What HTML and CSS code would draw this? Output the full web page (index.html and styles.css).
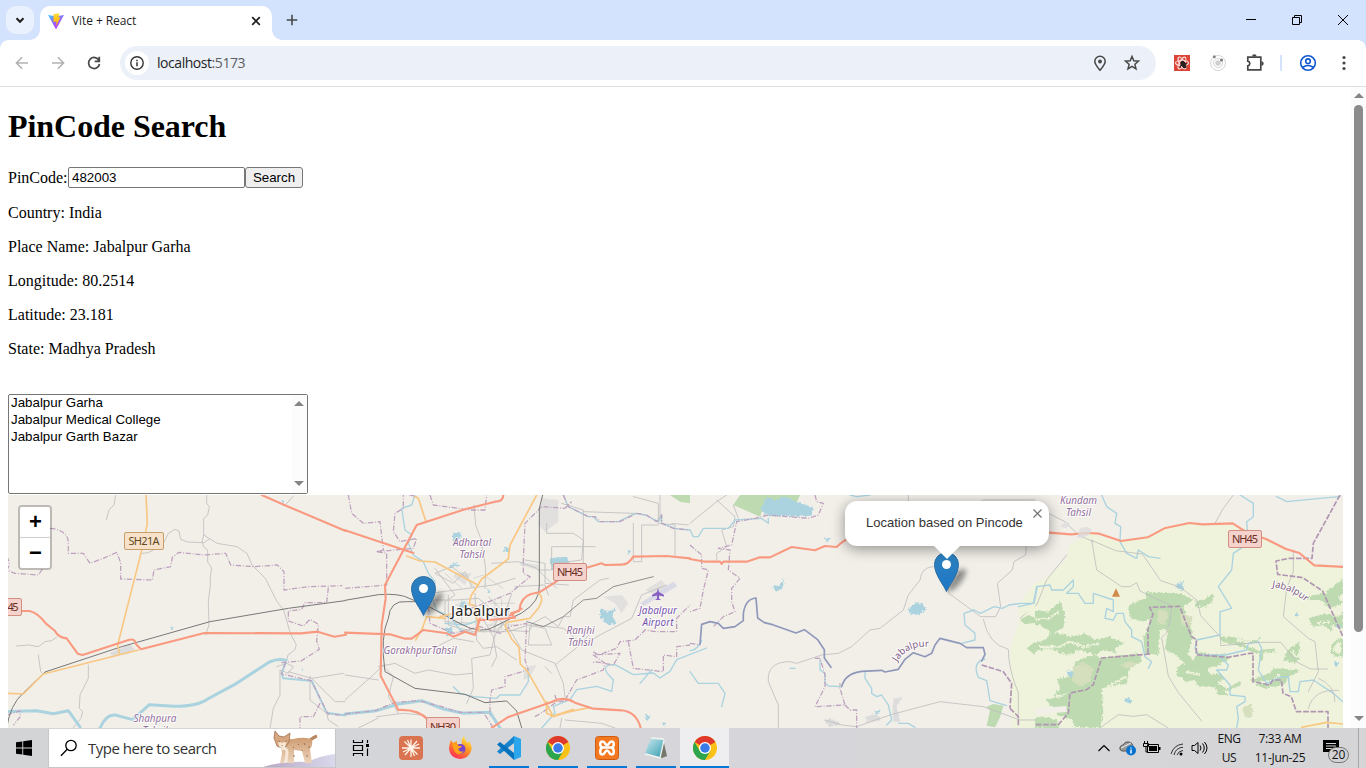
FILE: index.html
```html
<!DOCTYPE html>
<html lang="en">
<head>
<meta charset="utf-8">
<title>Vite + React</title>
<link rel="stylesheet" href="styles.css">
</head>
<body>
<div class="window">
  <header class="tabstrip">
    <button class="tab-search" aria-label="Search tabs"><svg width="28" height="28" viewBox="0 0 28 28"><path d="M10.5 12.3l3.5 3.5 3.5-3.5" fill="none" stroke="#1f1f1f" stroke-width="2"/></svg></button>
    <div class="tab">
      <svg class="favicon" width="16" height="16" viewBox="0 0 32 32"><defs><linearGradient id="va" x1="0" y1="0" x2=".6" y2="1"><stop stop-color="#41d1ff"/><stop offset=".5" stop-color="#8c6cff"/><stop offset="1" stop-color="#bd34fe"/></linearGradient><linearGradient id="vb" x1="0" y1="0" x2="0" y2="1"><stop stop-color="#ffea83"/><stop offset=".2" stop-color="#ffd020"/><stop offset="1" stop-color="#ffa800"/></linearGradient></defs><path d="M0 4l12 2h8l12-2L17 31q-1 2-2 0z" fill="url(#va)"/><path d="M11 2l12-2-2 9 4-1-9 19 1-10-6 1z" fill="url(#vb)"/></svg>
      <span class="tab-title">Vite + React</span>
      <svg class="tab-close" width="16" height="16" viewBox="0 0 16 16"><path d="M4.200 4.200l7.600 7.600M11.800 4.200l-7.600 7.600" stroke="#1f1f1f" stroke-width="1.700"/></svg>
    </div>
    <svg class="new-tab" width="20" height="20" viewBox="0 0 20 20"><path d="M10 4.700v10.600M4.700 10h10.600" stroke="#474747" stroke-width="1.600"/></svg>
    <div class="window-controls">
      <svg width="46" height="40"><path d="M18 19.500h10" stroke="#000"/></svg>
      <svg width="46" height="40"><path d="M18.500 17.500h7v7h-7zM20.500 17v-1.500h7v7h-2" fill="none" stroke="#000"/></svg>
      <svg width="46" height="40"><path d="M18 15l10 10M28 15L18 25" stroke="#000"/></svg>
    </div>
  </header>
  <nav class="toolbar">
    <svg class="nav-icon" viewBox="0 0 24 24"><path d="M18 12H7M12.200 6.200L6.400 12l5.800 5.800" fill="none" stroke="#b2b2b2" stroke-width="1.600"/></svg>
    <svg class="nav-icon" viewBox="0 0 24 24"><path d="M6 12H17M11.800 6.200l5.800 5.800-5.800 5.800" fill="none" stroke="#b2b2b2" stroke-width="1.600"/></svg>
    <svg class="nav-icon" viewBox="0 0 24 24"><path d="M17 9.500a5.500 5.500 0 1 0 .5 3.500M17.300 5.800v4.600h-4.600" fill="none" stroke="#474747" stroke-width="1.700"/></svg>
    <div class="omnibox">
      <span class="site-info"><svg width="16" height="16" viewBox="0 0 16 16"><circle cx="8" cy="8" r="6.200" fill="none" stroke="#333" stroke-width="1.400"/><path d="M8 7.200v4M8 4.700v1.500" stroke="#333" stroke-width="1.500"/></svg></span>
      <span class="url">localhost<i>:5173</i></span>
      <svg class="pin-icon" width="20" height="20" viewBox="0 0 20 20"><path d="M10 17.200C7 13.700 4.800 11.300 4.800 8.500a5.200 5.200 0 0 1 10.400 0c0 2.800-2.200 5.200-5.200 8.700z" fill="none" stroke="#474747" stroke-width="1.500"/><circle cx="10" cy="8.500" r="1.900" fill="#474747"/></svg>
      <svg class="star-icon" width="20" height="20" viewBox="0 0 20 20"><path d="M10 3.500l1.800 4.300 4.700.4-3.600 3.100 1.100 4.600-4-2.500-4 2.500 1.100-4.600-3.600-3.100 4.700-.4z" fill="none" stroke="#474747" stroke-width="1.500"/></svg>
    </div>
    <div class="extensions">
      <svg width="16" height="16" viewBox="0 0 16 16"><path fill="#db4436" d="M0 0h16v16H0z"/><g fill="none" stroke="#f8d8d4" stroke-width="1.200"><ellipse cx="8" cy="8" rx="6.500" ry="2.500"/><ellipse cx="8" cy="8" rx="6.500" ry="2.500" transform="rotate(60 8 8)"/><ellipse cx="8" cy="8" rx="6.500" ry="2.500" transform="rotate(120 8 8)"/></g><path d="M7 7l2-1 2 2 1 4-2 1-3-3zM7 10l-1 3M11 8l2 1M11 10l1 3" stroke="#292020" fill="#292020"/></svg>
      <svg width="16" height="16" viewBox="0 0 16 16"><g fill="none" stroke="#d4d4d4"><circle cx="8" cy="8" r="7.500"/><circle cx="8" cy="8" r="4.500"/></g><circle cx="8" cy="8" r="2.700" fill="#d0d0d0"/><circle cx="4.300" cy="1.800" r="1.500" fill="#858585"/><circle cx="11.500" cy="5" r="1.500" fill="#777"/></svg>
      <svg width="20" height="20" viewBox="0 0 20 20"><path d="M3.800 4.200h13v12.600h-13v-4q2-.4 2-2.300t-2-2.300z" fill="none" stroke="#474747" stroke-width="1.700"/><path d="M8 3.600a2.300 2.300 0 0 1 4.600 0zM17.400 8.200a2.300 2.300 0 0 1 0 4.600z" fill="#474747"/></svg>
      <b class="divider"></b>
      <svg width="18" height="18" viewBox="0 0 18 18"><g fill="none" stroke="#1258d0" stroke-width="1.600"><circle cx="9" cy="9" r="7.300"/><circle cx="9" cy="7.200" r="2.300"/><path d="M3.500 13.500q5.500-4 11 0"/></g></svg>
      <svg width="16" height="16" viewBox="0 0 16 16" fill="#474747"><circle cx="8" cy="2.500" r="1.600"/><circle cx="8" cy="8" r="1.600"/><circle cx="8" cy="13.500" r="1.600"/></svg>
    </div>
  </nav>
  <main class="viewport">
    <div class="page">
      <h1>PinCode Search</h1>
      <div class="search-row"><label for="pin">PinCode:</label><input id="pin" class="pin-input" value="482003"><button class="search-button">Search</button></div>
      <p>Country: India</p>
      <p>Place Name: Jabalpur Garha</p>
      <p>Longitude: 80.2514</p>
      <p>Latitude: 23.181</p>
      <p>State: Madhya Pradesh</p>
      <div class="listbox">
        <ul><li>Jabalpur Garha</li><li>Jabalpur Medical College</li><li>Jabalpur Garth Bazar</li></ul>
        <div class="list-scroll"><span class="arrow-up"></span><span class="arrow-down"></span></div>
      </div>
      <div class="map">
<svg class="map-art" viewBox="8 495 1335 233" width="1335" height="233">
<defs>
<linearGradient id="mk" x1="0" y1="0" x2="0" y2="1"><stop stop-color="#2e80bd"/><stop offset="1" stop-color="#1d78c7"/></linearGradient>
<filter id="soft" x="-50%" y="-50%" width="200%" height="200%"><feGaussianBlur stdDeviation="2.500"/></filter>
<filter id="organic" x="-5%" y="-5%" width="110%" height="110%"><feTurbulence type="fractalNoise" baseFrequency=".14" numOctaves="3" seed="4"/><feDisplacementMap in="SourceGraphic" scale="14" xChannelSelector="R" yChannelSelector="G"/></filter>
<g id="marker"><ellipse cx="10" cy="-12" rx="5" ry="14" transform="rotate(38 10 -12)" fill="#333" opacity=".5" filter="url(#soft)"/><path d="M0-.5C-2-6-12-17-12-27.500a12 12 0 0 1 24 0C12-17 2-6 0-.5z" fill="url(#mk)" stroke="#2a6ea4" stroke-width="1"/><circle cy="-27.500" r="4.500" fill="#fff"/></g>
</defs>
<rect x="8" y="495" width="1335" height="233" fill="#f2efe9"/>

<!-- forest reserve -->
<g transform="translate(1020 490) scale(.33333)">
<path d="M215 130L290 155 385 142 435 115 510 100 640 106 700 147 740 150 880 225 970 231V714H0l-5-370 45-60 50-30 45-40 15-50z" fill="#f0f3dc"/>
<g filter="url(#organic)">
<g fill="#bddab1">
<path d="M5 385l45-25 35 5 35-30 15 35-5 45-35 15-35-25-35 0zM25 465l50-15 20-25 60 15 40-10 30 20 45-10 45 20-30 15 5 15-40-10-25 15-45-15-35 15-65-20-45 15z"/>
<path d="M325 345l55-20-5-20 55 5 50 0 40 20-30 20 15 45 15 40-15 60 45 45-10 25-70-5 0-25 25-15-35-30-25-10 10-65-25 5-5 75-40-5-5-45 25-60-20 10-45-10z"/>
<path d="M240 505l115-15 10 25-35 20-10 45-75 15 5 75-10 45-80-5 0-20-50-15 0-20-20-8-10-20 40-5 20-10-40 5 20-20-10-30 45-10 10-40 60-25z"/>
<path d="M525 335l25-5 30-20 0 20-25 20-30 0zM470 530l60-5 30 5 10 25 30-5 15 15-25 15 35 35-30 0-10-25-50 0-10-20-30 5zM530 485l50 10 30-5 20 15-35 20-40 15-35-20z"/>
<path d="M605 445l30-5 60 15 30-15-15 20-60 5-45-10zM690 570l60-20 10-15 80 5-30 20-20 25-60 10-20-10zM840 455l-35 20-15 35 30 10 25-15-20-5 15-20zM865 385l50-15 40 10 15-15v50l-35-10 0 20-25-20-30 5z"/>
<path d="M850 320l65-10 35-30 20-15v45l-15 10 15 20-40 15-30-25-35 0zM20 690l50-10 40 10 10 24H30z"/>
</g>
<g fill="none" stroke="#bddab1" stroke-width="9"><path d="M948 455q-20 25-5 40l25 0v-45zM570 575l50 25 40-20M600 440l110 45 55-5M725 490v20"/></g>
<g fill="none" stroke="#f0f3dc" stroke-width="6"><path d="M30 390l60-5 25-20M60 470l60 0 30-15 40 15 50-10M500 545l40 10M650 448l40 12M700 580l50-5 30-20M815 480l10 20M890 400l40-5M260 590l60-30"/></g>
<path d="M415 360l30 5-10 40-25-5zM480 370l40 10-10 30-25-5zM160 530l25-15 35 20-10 40-30 15-25-20zM665 655l30-15 5 35-20 10zM300 525l25-10 35 5-35 15z" fill="#d5dfbd"/>
<g fill="#aad3df"><path d="M470 280l20-5 0 25-20-5zM140 542l20 0-5 22-12-8zM315 625l18 0 0 16-18-5zM942 517l20 0-15 15zM825 368l8-2 0 14-8-2zM965 405h-20l12 15z"/></g>
</g>
<path d="M0 670l70-8 70-5" stroke="#f2efe9" stroke-width="18" fill="none"/>
<g class="water"><path d="M245 15l15 35 30 20-5 30 17 10-2 45 20 35 30 15 5-25 30 20 35 5"/><path d="M660 15l40 25 0 40-20 15 5 65-45 30-5 50-40 50 40 65-35 10 0 70-70 15-5 25 10 20 80 0 65-15 5-20 30-5 10 20-10 65 25 40 45-20 20 0 5 45 25 0 5-30 40-5 60 40 40 35 25 5"/><path d="M-5 350l45-10 10-50 40-5 5 15 35 0 30-30 0 20-20 20 35 0 20 30 25 0 0-30 60 20 0 35-20-10-5 30 25 5 10-20 20 0 5 25 20 25 0 20 30 15 10 45 20 15-10 20"/><path d="M600 500l25 25-5 15-30 0 40 45 0 30 45 5 0 15-25 15 5 35-5 30M770 20l30 15 100-10 60-5"/></g>
<g class="road"><path d="M85 70l50 25 40 40 45 20M215 150l15 90 75 50 25 0 20-12 10 25 95 45-5 45-10 35-15 15 20 115 30 50 70 85M217 152l70 30 80 10 55 80 60 20 50 40 10 45 60 65 0 25 120-10 60 0 50 60 40 20 50 0"/><path d="M820 180l0 65-20 50-10 85 75 65 20 10 10 90-30 60M640 15l-30 40-25 45M895 565q50 20 50 70M865 656q15-60 90-55M240 714l55-40 45 5 40-5 65 40M140 195l-60 75-30 75-50 40"/></g>
<g class="boundary dash"><path d="M960 15l-80 145-4 45-70 0-38 8 5 40 75 10 60 40 60 135M390 492l-145 12-25 80-20 15-50 10-5 60-30 35H0M384 492l0-75 15-45-10-20 90-3 35 90 15 10 0 45 95 8 65-12 10 0 0 85 50 10 10-15 25 0 5 40 25 10 15 45 95 0 0 55"/></g>
<path class="trunk" d="M88 128l65 5 50-4 35 2 65 22 80-11 50-27 75-16 40 4 90-3 45 29 55 18 60 30 40 12 45 37 90 5"/>
<path class="secondary" d="M845 712l75-15 50 5"/>
<path d="M276 320l12-25 12 25z" fill="#d18b4b"/>
</g>

<!-- western district -->
<g transform="translate(0 490) scale(.33333)">
<path d="M330 488l60-25 15 15-20 14-50 5z" fill="#dcdcdc"/><path d="M510 410l10 2-3 10zM843 30l10 3-3 8zM905 535l4 2-2 8z" fill="#aad3df"/>
<g class="road"><path d="M347 15l-5 30-15 15-8 30M425 190l20-2 15-8 30-20 15-30 20-12 12 5 5 25 20 8 50 2 15-10M620 15l0 25 8 10-5 25-12 10 0 50-5 20 5 15 12 10 0 35 12 20-4 25 0 25-6 50 2 70-10 30M611 135l40 25 60 10 30 20 15 35 40 40 35 70 20 25 20 70 18 35-5 15-20 15-5 20M880 18l-22 25M50 468l35-3 30 5 20-15 20-3 15-10M115 495l7 50 5 5M265 525l0 40-25 50-2 40 10 10-5 20-25 30M830 530l30-10 20 10-15 20-25-10 0 75-20 40-10 60M865 545l70 20 95-15M930 560l75 75 30 0M930 560l0 70 50 40 5 20 30 20"/></g>
<g class="water"><path class="wide" d="M20 665l90-3 50 9 45-9 35 49M300 714q20-45 50-38l48 13 50-45 75 5q70 0 100-22l80-43 105-68q28-12 50-5"/><path d="M857 517l-12 33 5 15 85 8 45 95 55 8" stroke-width="6"/></g>
<g class="boundary"><path d="M20 200q15 20 0 40l25 10 70 5 35-50M150 115q55 5 55 45l0 30 45 0 20 30 40-15 40-18 12 30 0 50 95 3 5-30 50-10 5-28 20-15 75 8 65-5 15 35 70 5 70-5 20 20 0 55 75-10 100-3M985 293l-5 45-65 0-10 20-40 5 0 30 45 15 20-20 25 15-5 50 8 25-55 35-60 5M857 517l-13 35 90 20 50 100 50 5M960 640l-20 40-40 0 0 34M20 675l40-12 0 18-20 25"/></g>
<path class="rail" d="M20 714q10-70 50-105l65-63 230-76 265-75 235-40 170-23"/>
<path class="secondary" d="M438 15l4 85-14 70-70 275-5 20 5 24M20 610l50 2 60-60 285-72"/>
<path class="trunk" d="M65 363l23 0q25 5 50 38l27 22q10 20 35 22l33 46 15 4 135-44q22-9 25 12l15 15 190-49 290 1 50-5 50 15 35-6M785 15l80 35 172 73"/>
</g>

<!-- city and surrounding tehsils -->
<g transform="translate(345 490) scale(.33333)">
<path d="M590 25l50 5 0 65-40 30-20-20zM330 250l50 0-20 35-35-25zM525 215l55 10 0 15-55-15zM540 530l35-5-20 35-20 10zM775 320l55-5 20 25-20 30-20-30zM900 300l50-30 20 30-40 15z" fill="#dcdcdc" opacity=".8"/>
<path d="M975 15l60 0 0 25-30-5z" fill="#bddab1"/>
<g fill="#aad3df" filter="url(#organic)"><path d="M615 205l50-5 10 20-15 25-40-5zM765 355l20 10 30-10-15 20 15 25-25 5-25-25zM325 130l20-5 5 20-25 10zM480 170l15 2-3 15-15-2zM312 232q15-20 32-8l-5 8q-15-10-25 5zM428 298l10 3-2 8-10-2zM903 673l12 5-3 16-10-5zM345 335h20l-4 20-18-3zM300 415l20-5 5 20-20 10zM847 180l12 3-7 12zM948 695l15 4-6 10z"/></g>
<g class="road">
<path d="M387 45l5 60 15 40 15 90-2 60M440 220l80-5 55 20 60 60M360 260l-40-30-50 20 55 30 35-35 20 45M270 235l60 80-30 20 0 60 80 5M255 310l190-25 65-20M270 330l60 0 70-5 60 50-15 50 45 0 60-20 50 10 20 50-70 0 5-60 45-25 40 30 15-30 20 0 10-50 80-60 25-5M310 315l0 90 75 20 65 0 30-30M390 310l5 140 20 25 40-5 60 40M405 370l40 70 10 60-15 30M480 395l-30 40-15 60-55 10 5 90-20 45M430 320l50 50 20-60M385 455l-60-10-50 25M100 530l50-10 60 30 40-10 80 15 50-5M115 530l30 30-15 60 30 50M480 420l70 5 15-20 90 10 60 50 50-30 95-50 30-70 50-20 25-10M490 410l40 70 100 40 25 60 5 40M630 525l75-60 35-40M580 240l40 0 0-70 130 0M605 100l0 30 80 0 30 20-5 60-80 10M650 40l65 20 0 160M715 65l150 5M865 100l0 115 25 0 0-110 50 0M865 20l75 20 0 60 50 5 0 90M945 15l0 80M980 100l50 5M540 210l60 10 0 60 70 5M0 555l100 15M0 630l90-80 25-25M95 680l80-10 55 5M40 714l60-30"/>
<path d="M510 290l90-5 10 30M600 530l20 20M650 685l-5 29M660 690l110 10 40 14"/>
</g>
<path class="rail" d="M545 395l50 15 60-30 60-50 40-5 50-35 80-20 40-10" opacity=".8"/>
<g fill="none" stroke="#c9c9c9" stroke-width="2"><path d="M435 340h75M440 380h75M425 405h90M450 325v115M470 325v95M490 340v75M415 430l40-45 40 35M350 325v80M330 345h55M335 370h50M385 265l30-10 60 40M350 245l40 50M300 250l50 45"/></g>
<g class="water"><path d="M210 15l-10 30-30 10 10 65 20 15-10 25 15 35 30 20 15 35 20 25-10 45 15 40 40 20 30 40 40 10M655 15l15 35 60 30 15 0 15 15 60 0 50-25 30 5 40 20 10-20 0 25 40 15 45 5"/><path d="M590 714l40-45-5-20 50-20 20-30 60-10 45 15 5-35q-50-45 5-45l55 30 60-5 20 15 30-20 20-35 90-35M885 580l35-40M300 400l60 5 45-15M550 545l0 30-25 40-60 0-10 10-70-5-40-10-20-20"/><path class="wide" d="M0 672l95-10 65-20 70-10 65 25 60 13 80-3 30 47"/></g>
<g class="boundary"><path d="M10 15l10 55 35 30 50-5 10 85-20 5 30 5 0 50 0 45-125 10M95 185l110-10 10-30-50 10-20-30 5-55 25-15 0-45 40 10M255 15l10 30 110 15 45 0 5-45M590 50l-50 50-5 110 0 40 20 10-60 50-50 20-80 30M595 50l65 5 20-20M655 15l15 35 60 30 20 0 15 15 60 0 50-25 30 5 30 20 15-20 0 25 35 15 45 5M250 350l5 50 70 30 80-20 60 20 30-20 50-10-5 110 10 30-70 20 0 30-40 10-5 30 0 50M660 630l35-60 80-30 5-20-35-25 80-5-20 35-55-10-10 5M745 485l15 10 55-20 10-20 45-5 30-30 35 5 60 0 0-40 40-40M850 455l15 80 90 10 0-50 40 5 0-30 40-5M570 680l25-15 40-30-5-20M640 635l40-5M0 672l90-10 60-25 70-5 60 15 65 20 70 0 30 47"/></g>
<path class="rail" d="M0 331l100-17q65-5 95 12l50 20 100 55q65 35 105 8l80-40q57-35 53-84l0-230 10-40"/>
<path class="rail" d="M225 335h-40q-50-5-55 50-25 55-10 160l90 50 150 18 60 25 65-5 30 30 15 50"/>
<path class="secondary" d="M210 20l10 5 23 70M185 198l40 15 45 3 130 70M575 15l-80 150-5 42-80 60-12 20-20 30-5 25 15 5 15 75M300 385l-55-5-13 35-20 35M285 380l35-8M580 310q20 12 0 45l-25 30-70 12-5 10 20 40 22 25 4 50 20 20 75 130-2 8"/>
<path class="trunk" d="M0 121l205 68M475 15q0 20-25 20l-90 23-145 47-95 180 2 40-12 80-3 152 53 103q60-3 90 30l30 24M0 428l135 5 45 13 20 0 35-26 70 10 20 10 35-15 30 10 15-50M400 390h35l75-7-12-13 25-8q3-40 35-50l25-5 55-35M720 235l50-15 10 5 50-1q20 0 35-24l100-2 70 7M495 376l35-20"/>
<path class="secondary" d="M625 680q40-15 110-27M605 635l0 35 20 8 60-20"/>
<path class="trunk" d="M440 714l50-33 130-45q35-20 70 2l55 18 85 5q45 5 57 53"/>
<path d="M885 340l100-65 12 13-100 60z" fill="#dadae7"/>
</g>

<!-- eastern river valley -->
<g transform="translate(690 490) scale(.33333)">
<path d="M130 45l20-30 180 0-15 35-90-10-15 40z" fill="#bddab1"/>
<path d="M965 714l-5-240 25-75 50-60 0 375z" fill="#f0f3dc"/>
<path d="M990 390l25-15 20 8v15l-30 5zM1010 475l25-20v40zM890 650l20-8 30 5-10 35-15 30-25-5 10-45z" fill="#bddab1"/>
<g filter="url(#organic)"><path d="M210 60l20-38 25 10 30-15 35 20 50 15-5 25-40 2-90-2zM248 288l20-3 15-20-5 30-20 10zM655 355l30-20 25 20-25 20-30-5zM402 145l18 2-8 8zM555 665l15-5-10 25z" fill="#aad3df"/>
<path d="M610 625l25 0-15 25 10 45-20 0zM525 680l35-10 15 20-45 5zM400 690l25-5 30 20-35 5z" fill="#dcdcdc"/></g>
<g class="road"><path d="M0 100l80-65 30-20M80 30l55 50-5 30-35 10 15 50-30 20 0 20M130 45l15 40M655 15l0 35 40 35M850 50l30-20 155 0M730 230q-35 0-40 40l-35 45-15 45-70 55-30 5-55 50-40 20-50 5-75 25-20-5q-70 0-65 60l30 70 0 70M1010 150l-3 45-35 20-5 25-45 40 10 70-15 30-45 0-95-70-5-25M880 388q15 75 75 90 0 60 30 130l0 90M500 710l100-35 150-40 130 15 110 40 45 0M405 690l50 15 45 5M800 240l12 10-10 15"/></g>
<g class="water"><path d="M0 120l10 20 15 0 15-25 75 0 20-25 80-5 20 15 0-15M815 460l40-10 0-20-30-25-3-35 30-10 20 10 40-20 25 5 20-10 35-5 40 0 10-50M885 507q-40 10-20 55l25 10 10 60 50 15M300 535l15 0M525 545l0 20 20 30 0 15 15 10 15-5 20 30 10 45-15 15M0 545l25 35 60 0 20 30-10 40M625 700h30l20 12M390 510l0 30 15 10 0 30 10 8 35 2M480 15l20 5 40-5M0 482q20 0 35-30"/></g>
<g class="boundary"><path d="M0 165l35 30 0 40 20 5-15 60-10 55-30 10M375 15l5 20 20 5-15 35-30 10-120-10-40 10-55 10-15 70-40 10 35 5-5 60 35 25-25 30 0 40 10 30-35 15-30 30M375 505l15 0 15 50 0 35-30 60 90-5-15-50 0-15M465 645l15 15 20 0 0 54M0 460l30 5"/></g>
<g class="river-boundary"><path d="M30 463l5-60 25-8 25 5 15 15 35-5 25-18 0-20q5-45 38-48l5 60 20 14 25 6 70 25 25-10 40 30 20 30 0 25 20 28M455 590q10-40 60-46l60-3 10 5 40-8 20-30 25-20 35 12 20-10 10-25 15-20 60 15 20 13 50 0 5 20-10 20"/></g>
<g class="boundary dash"><path d="M875 525l65 20 25 35-5 75M960 655l25 25 0 30"/></g>
<path class="trunk" d="M0 207l45 8 45 0 5 7 5-7 70 0 40-13 30 0 65-31 70 10 30-13 35 3q20-20 50-32"/>
</g>

<g transform="translate(1020 490) scale(.33333)"><path d="M170 143l10-28 20-5 15 8-5 15-25 12zM120 110l15-15 15 5-10 15z" fill="#dcdcdc" opacity=".75"/></g>

<g class="shields"><g fill="#f7e2c9" stroke="#c89d6c"><rect x="124.500" y="532.500" width="39" height="17" rx="1.500"/></g><g fill="#f5d2cb" stroke="#d38e82"><rect x="-10.500" y="598.500" width="32" height="17" rx="1.500"/><rect x="553.500" y="563.500" width="33" height="17" rx="1.500"/><rect x="426.500" y="717.500" width="33" height="17" rx="1.500"/><rect x="1228.500" y="530.500" width="33" height="17" rx="1.500"/></g>
<g class="shield-text"><text x="128.500" y="545" textLength="31" fill="#60471f">SH21A</text><text x="7.500" y="610.700" textLength="11">45</text><text x="557" y="576.200" textLength="26">NH45</text><text x="430" y="730.500" textLength="26">NH30</text><text x="1232" y="543.200" textLength="26">NH45</text></g></g>
<g class="tehsil"><text x="472" y="546" textLength="38">Adhartal</text><text x="472" y="558" textLength="25">Tahsil</text><text x="580.500" y="634" textLength="28">Ranjhi</text><text x="580.500" y="646" textLength="25">Tahsil</text><text x="420" y="653.500" textLength="73">GorakhpurTahsil</text><text x="155" y="722" textLength="43">Shahpura</text><text x="155" y="734" textLength="25">Tahsil</text><text x="1078.500" y="504" textLength="37">Kundam</text><text x="1078.500" y="516" textLength="25">Tahsil</text></g>
<g class="airport"><text x="658" y="613.500" textLength="38">Jabalpur</text><text x="658" y="625.500" textLength="31">Airport</text><path d="M658 588l1 4 5 3v1.500l-5-1v3l2 1.500h-6l2-1.500v-3l-5 1v-1.500l5-3z"/></g>
<defs><path id="west-label" d="M897 662Q907 645 928 647"/><path id="east-label" d="M1272 587Q1294 590 1309 605"/></defs>
<g class="border-label"><text><textPath href="#west-label">Jabalpur</textPath></text><text><textPath href="#east-label">Jabalpur</textPath></text></g>
<use href="#marker" x="423.500" y="616"/>
<text class="city" x="451" y="616" textLength="59">Jabalpur</text>
<use href="#marker" x="946.500" y="592"/>
</svg>
        <div class="zoom-control"><button>+</button><button>−</button></div>
        <div class="popup"><div class="popup-box">Location based on Pincode<svg class="popup-close" width="9" height="9" viewBox="0 0 9 9"><path d="M.5.500l8 8M8.500.500l-8 8" stroke="#757575" stroke-width="1.200"/></svg></div><span class="popup-tip"></span></div>
      </div>
    </div>
    <aside class="scrollbar"><span class="arrow-up"></span><span class="thumb"></span><span class="arrow-down"></span></aside>
  </main>
  <footer class="taskbar">
    <div class="start"><svg width="16" height="16" viewBox="0 0 16 16"><path d="M0 2.300l6.300-.9v6.100H0zM7.200 1.200L16 0v7.500H7.200zM0 8.400h6.300v6.200L0 13.700zM7.200 8.400H16V16l-8.800-1.300z"/></svg></div>
    <div class="search-box"><svg width="18" height="18" viewBox="0 0 18 18"><circle cx="11" cy="6.500" r="5.200" fill="none" stroke="#000" stroke-width="1.300"/><path d="M7.200 10.300L1 16.800" stroke="#000" stroke-width="1.300"/></svg><span>Type here to search</span>
      <svg class="lynx" width="72" height="38" viewBox="0 0 72 38"><defs><linearGradient id="hill"><stop stop-color="#b7a6c3"/><stop offset="1" stop-color="#d9d9ed"/></linearGradient><linearGradient id="fur" x1="0" x2="0" y1="0" y2="1"><stop stop-color="#cf9c72"/><stop offset="1" stop-color="#ecd5bd"/></linearGradient></defs><path d="M0 38q20-6 44-5 16-7 28-8v13z" fill="url(#hill)"/><path d="M46 12q5-4 8-5" stroke="#b98760" stroke-width="3" fill="none"/><path d="M17 10q12 1 18-1 10-1 14 2 1 6-2 9l2 14h-7l-3-12-8-1 0 13h-7l1-8-4 8h-4l2-10z" fill="url(#fur)"/><path d="M12 2l4 5 5 1 6-4-1 9-5 7-7-3-3-8z" fill="#d6a680" stroke="#a06f4b" stroke-width=".8"/><path d="M15 12l4 2 5-2-2 6-3 2-3-3z" fill="#f7e8d4"/><path d="M15 12l2 1M22 13l2-1M19 16v1M35 15l1 1M41 14l1 2M30 18l1 1M39 21v1M46 17v2M44 26v2M31 26v2" stroke="#8c6040" stroke-width=".8"/><path d="M19 20q5-2 5 4l-1 8" fill="none" stroke="#f5e6d6" stroke-width="3"/></svg>
    </div>
    <div class="task-view"><svg width="18" height="16" viewBox="0 0 18 16"><path d="M1.500 0v2.500h9V0M1.500 16v-2.500h9V16M1.500 5.500h9v5h-9zM15.500 0v3M15.500 8.500V16" fill="none" stroke="#000" stroke-width="1.200"/><path d="M14 4h3v3h-3z"/></svg></div>
    <div class="apps">
      <div class="app"><svg width="24" height="24" viewBox="0 0 24 24"><rect width="24" height="24" rx="4" fill="#d97350"/><path d="M12 12V3.500M12 12V21M12 12H3M12 12h9M12 12L5.500 5.500M12 12l6.500 6.500M12 12l6-7M12 12l-6 7M12 12L8.500 4M12 12l3.500 8M12 12l8-4M12 12l-8 4" stroke="#fff4e8" stroke-width="1.300"/></svg></div>
      <div class="app"><svg width="24" height="24" viewBox="0 0 24 24"><defs><linearGradient id="ff" x1=".8" y1="0" x2=".2" y2="1"><stop stop-color="#fff14d"/><stop offset=".45" stop-color="#ff9422"/><stop offset="1" stop-color="#ff235b"/></linearGradient></defs><path d="M3 4l2 3 4-2 0 3 5 0q-1-5 2-8 1 5 4 7l1-2q4 6 2 10-2 7-11 8Q2 22 1 13q0-5 2-9z" fill="url(#ff)"/><circle cx="12.500" cy="13" r="5" fill="#7a45cd"/><path d="M4 7q4 0 7 3l3 0q-1 2-4 3 2 4 6 2-4 6-9 1-2-3-3-9z" fill="#ffa31a"/></svg></div>
      <div class="app running"><svg width="24" height="24" viewBox="0 0 24 24"><path d="M17 0l7 3v18l-7 3z" fill="#2ba6ed"/><path d="M17 0v7L3 18l-3-2.500z" fill="#1685ce"/><path d="M0 8.500L3 6l14 11v7z" fill="#0873bd"/></svg></div>
      <div class="app running"><svg width="24" height="24" viewBox="0 0 48 48"><g id="chrome"><circle cx="24" cy="24" r="24" fill="#fbc116"/><path d="M24 24L3.200 12A24 24 0 0 1 44.800 12z" fill="#df392d"/><path d="M3.200 12A24 24 0 0 0 24 48l10.400-18L24 24 13.600 30z" fill="#2da44e"/><circle cx="24" cy="24" r="12" fill="#fff"/><circle cx="24" cy="24" r="9.500" fill="#397be9"/></g></svg></div>
      <div class="app running"><svg width="24" height="24" viewBox="0 0 24 24"><rect x=".5" y=".5" width="23" height="23" rx="3" fill="#f37820" stroke="#ce5d12"/><path d="M7.500 5.500c-3 0-3 5 0 6h9c3-1 3-6 0-6s-2 3.500-4.500 3.500S10.500 5.500 7.500 5.500zM7.500 11.500c-3 1-3 7 0 7s2-4 4.500-4 1.500 4 4.500 4 3-6 0-7" fill="none" stroke="#fff" stroke-width="2.500"/></svg></div>
      <div class="app running"><svg width="24" height="24" viewBox="0 0 24 24"><defs><linearGradient id="note" x1="0" y1="0" x2="1" y2="1"><stop stop-color="#c7eaf0"/><stop offset="1" stop-color="#3a9db1"/></linearGradient></defs><path d="M19 3l4 17-5 2-4-2z" fill="#77776d"/><path d="M7 3l13 1-4 17-15-4z" fill="url(#note)"/><path d="M7 2l13 1M1 18l15 4 4-18" stroke="#eef5f0" fill="none" stroke-width="1.300"/></svg></div>
      <div class="app active"><svg width="24" height="24" viewBox="0 0 48 48"><use href="#chrome"/></svg></div>
    </div>
    <div class="tray">
      <svg width="12" height="8" viewBox="0 0 12 8"><path d="M.5 7L6 1.500 11.500 7" fill="none" stroke="#000" stroke-width="1.200"/></svg>
      <svg class="cloud" width="18" height="16" viewBox="0 0 18 16"><path d="M3 11Q0 10 1 7q1-2 3-2Q6 1 10 2q3 0 4 4 2 1 2 4l-3 1z" fill="#9a9a9a" stroke="#555"/><path d="M2 8l10-5" stroke="#eee"/><circle cx="12" cy="10.500" r="5" fill="#0873cf"/><path d="M12 9.500v4M12 7.500v1" stroke="#fff" stroke-width="1.400"/></svg>
      <svg class="battery" width="18" height="14" viewBox="0 0 18 14"><path d="M4.500 3.500h11v8h-11z" fill="none" stroke="#000"/><path d="M6 5h8v5H6zM16 6h1.500v3H16z"/><path d="M1.500 0v2M4.500 0v2M.5 2.500h5v3h-5zM3 6v5h2" fill="none" stroke="#000"/></svg>
      <svg class="wifi" width="16" height="16" viewBox="0 0 16 16"><g fill="none" stroke="#333"><path d="M2 14A14 14 0 0 1 14 4M5 15A10 10 0 0 1 14 7.200M8 15a7 7 0 0 1 6-4.500"/></g><circle cx="12" cy="14" r="1.500"/></svg>
      <svg class="speaker" width="18" height="14" viewBox="0 0 18 14"><g fill="none" stroke="#000"><path d="M1 4.500h2.500L7 1.500v11L3.500 9.500H1zM9 4.500q2 2.500 0 5M11.500 2.500q3.500 4.500 0 9M13.500 1q5 6 0 12"/></g></svg>
      <div class="language"><span>ENG</span><span>US</span></div>
      <div class="clock"><span>7:33 AM</span><span>11-Jun-25</span></div>
      <div class="notifications"><svg width="16" height="15" viewBox="0 0 16 15"><path d="M0 0h16v12H9l-3 3v-3H0z"/><path d="M3 3.500h10M3 6h10M3 8.500h6" stroke="#d4d4d6"/></svg><span class="badge">20</span></div>
    </div>
  </footer>
</div>
</body>
</html>
```
FILE: styles.css
```css
* { box-sizing: border-box; }
body { margin: 0; font: 16px "Liberation Serif", "Times New Roman", serif; color: #000; }
button { padding: 0; }
svg { display: block; flex: none; }
.window { width: 1366px; height: 768px; display: flex; flex-direction: column; overflow: hidden; background: #fff; }

.tabstrip { height: 40px; flex: none; display: flex; background: #d3e2fd; padding: 6px 0 0 6px; font-family: "Open Sans", "Noto Sans", sans-serif; }
.tab-search { width: 28px; height: 28px; border: 0; border-radius: 10px; background: #eaf1fe; }
.tab { position: relative; width: 232px; height: 34px; margin-left: 6px; padding: 0 8px 5px; display: flex; align-items: center; background: #fff; border-radius: 10px 10px 0 0; }
.tab::before, .tab::after { content: ""; position: absolute; bottom: 0; width: 10px; height: 10px; }
.tab::before { left: -10px; background: radial-gradient(circle at 0 0, transparent 9.5px, #fff 10px); }
.tab::after { right: -10px; background: radial-gradient(circle at 100% 0, transparent 9.5px, #fff 10px); }
.tab-title { margin-left: 8px; font-size: 12px; letter-spacing: -.08px; color: #1f1f1f; flex: 1; }
.new-tab { margin: 4px 0 0 10px; }
.window-controls { display: flex; margin: -6px 0 0 auto; }

.toolbar { height: 47px; flex: none; display: flex; align-items: center; background: #fff; border-bottom: 1px solid #dedfe1; padding-left: 10px; gap: 12px; position: relative; }
.toolbar::before { content: ""; position: absolute; left: 0; right: 0; top: 0; height: 8px; background: radial-gradient(circle at 8px 8px, transparent 7.5px, #d3e2fd 8px) left / 8px 8px no-repeat, radial-gradient(circle at 0 8px, transparent 7.5px, #d3e2fd 8px) right / 8px 8px no-repeat; }
.nav-icon { width: 24px; height: 24px; }
.omnibox { width: 1036px; height: 34px; margin-left: 2px; border-radius: 17px; background: #ecf0f9; display: flex; align-items: center; padding: 0 14px 0 5px; }
.site-info { width: 24px; height: 24px; border-radius: 50%; background: #fff; display: grid; place-items: center; }
.url { margin-left: 8px; padding-bottom: 1px; flex: 1; font: 14px "Open Sans", sans-serif; color: #1f1f1f; letter-spacing: -.45px; }
.url i { font-style: normal; color: #5a5d61; }
.star-icon { margin-left: 12px; }
.extensions { display: flex; align-items: center; margin-left: 6px; }
.extensions > :nth-child(2) { margin-left: 20px; }
.extensions > :nth-child(3) { margin-left: 18px; }
.divider { width: 2px; height: 16px; background: #d3e2fd; margin: 0 17px 0 16px; }
.extensions > :last-child { margin-left: 19px; }

.viewport { height: 641px; flex: none; display: flex; overflow: hidden; }
.page { width: 1351px; padding: 0 8px; }
h1 { font-size: 32px; line-height: 37px; margin: 21px 0 22px; letter-spacing: -.05px; }
.search-row { height: 21px; display: flex; line-height: 21px; }
.search-row label { width: 60px; }
.pin-input { width: 177px; height: 21px; border: 1px solid #767676; border-radius: 2px; padding: 0 3px; font: 13.333px "Liberation Sans", Arial, sans-serif; background: #fff; }
.search-button { width: 58px; height: 21px; border: 1px solid #767676; border-radius: 3px; background: #efefef; font: 13.333px "Liberation Sans", Arial, sans-serif; color: #000; }
p { margin: 16px 0; line-height: 18px; }
.listbox { width: 300px; height: 100px; margin-top: 36px; border: 1px solid #767676; border-radius: 2px; display: flex; font: 13.333px "Liberation Sans", Arial, sans-serif; background: #fff; }
.listbox ul { list-style: none; margin: 0; padding: 0 2px; flex: 1; }
.listbox li { height: 17px; line-height: 16px; }
.list-scroll, .scrollbar { width: 15px; background: #fcfcfc; display: flex; flex-direction: column; justify-content: space-between; align-items: center; padding: 6px 1px 7px 0; }
.arrow-up, .arrow-down { border: 5px solid transparent; border-top-width: 0; border-bottom: 5px solid #858585; }
.arrow-down { border-top: 5px solid #858585; border-bottom-width: 0; }
.scrollbar { justify-content: flex-start; padding: 6px 0 7px; }
.scrollbar .thumb { width: 9px; height: 527px; margin-top: 7px; background: #8b8b8b; border-radius: 5px; }
.scrollbar .arrow-down { margin-top: auto; }

.map { position: relative; width: 1335px; height: 233px; margin-top: 1px; overflow: hidden; font-family: "Liberation Sans", Arial, sans-serif; }
.zoom-control { position: absolute; left: 10px; top: 10px; width: 34px; height: 65px; border: 2px solid rgba(0,0,0,.22); border-radius: 4px; background-clip: padding-box; display: flex; flex-direction: column; }
.zoom-control button { height: 31px; border: 0; background: #fff; font: bold 22px/30px "Liberation Sans", Arial, sans-serif; border-radius: 2px; color: #000; padding-left: 1px; }
.zoom-control button:first-child { border-bottom: 1px solid #ccc; }
.popup { position: absolute; left: 837px; top: 6px; width: 204px; display: flex; flex-direction: column; align-items: center; }
.popup-box { position: relative; z-index: 1; width: 204px; height: 45px; border-radius: 12px; background: #fff; box-shadow: 0 3px 14px rgba(0,0,0,.4); padding-left: 21px; font-size: 13px; line-height: 43px; color: #333; white-space: nowrap; }
.popup-close { position: absolute; right: 7px; top: 8px; }
.popup-tip { position: relative; z-index: 2; width: 26px; height: 13px; background: #fff; clip-path: polygon(0 0, 100% 0, 50% 100%); }

.road, .water, .boundary, .river-boundary, .trunk, .secondary, .rail { fill: none; stroke-linejoin: round; stroke-linecap: round; }
.road { stroke: #bebebe; stroke-width: 2.5; }
.water { stroke: #aad3df; stroke-width: 4; }
.water .wide { stroke-width: 9; }
.boundary { stroke: #bea1bd; stroke-width: 3.8; stroke-dasharray: 16 5 3 5; stroke-linecap: butt; }
.dash { stroke-width: 5; stroke: #b096b2; stroke-dasharray: 17 5; }
.river-boundary { stroke: #8f98b9; stroke-width: 5; }
.trunk { stroke: #f99a80; stroke-width: 6.3; }
.secondary { stroke: #f8c782; stroke-width: 5; }
.rail { stroke: #777; stroke-width: 3; }
.map-art text { font-family: "Noto Sans", "Open Sans", sans-serif; }
.shield-text { font-size: 11px; fill: #6b2d23; }
.tehsil, .airport, .border-label { font-size: 10px; font-style: italic; text-anchor: middle; fill: #94709d; paint-order: stroke; stroke: #fff; stroke-opacity: .75; stroke-width: 2px; }
.airport { fill: #7651ae; }
.airport path { stroke: none; fill: #875fc2; }
.border-label { text-anchor: start; font-style: normal; font-size: 9.5px; fill: #815c87; }
.city { font-size: 14.5px; fill: #222; paint-order: stroke; stroke: #fff; stroke-opacity: .65; stroke-width: 2.5px; }

.taskbar { height: 40px; flex: none; display: flex; background: linear-gradient(90deg, #d2d4d6, #d6d6da 50%, #d5d5d7); font-family: "Open Sans", "Noto Sans", sans-serif; color: #111; }
.start { width: 48px; display: grid; place-items: center; }
.search-box { width: 288px; height: 39px; margin-top: 1px; background: #fff; border: 1px solid #c7c7c9; border-top: 0; display: flex; align-items: center; padding-left: 11px; font-size: 15px; letter-spacing: -.5px; color: #333; }
.search-box > span { margin-left: 10px; white-space: nowrap; }
.search-box .lynx { margin-left: auto; }
.task-view { width: 50px; padding-right: 1px; display: grid; place-items: center; }
.apps { display: flex; }
.app { width: 49px; height: 40px; padding-top: 8px; display: flex; flex-direction: column; align-items: center; }
.app::after { content: ""; width: 40px; height: 2px; margin-top: 6px; }
.running::after, .active::after { background: #0878d5; }
.active { background: #eeeef0; }
.active::after { width: 49px; }
.tray { width: 268px; margin-left: auto; display: flex; align-items: center; }
.cloud { margin-left: 9px; }
.battery { margin-left: 6px; }
.wifi { margin-left: 8px; }
.speaker { margin-left: 6px; }
.language, .clock { height: 36px; display: flex; flex-direction: column; justify-content: space-between; align-items: center; font-size: 12px; line-height: 17px; }
.language { width: 36px; margin-left: 2px; letter-spacing: -.5px; }
.clock { width: 66px; letter-spacing: -.3px; white-space: nowrap; }
.notifications { position: relative; width: 46px; height: 40px; padding: 12px 0 0 10px; border-right: 1px solid #a8a8aa; }
.badge { position: absolute; left: 15px; top: 19px; width: 21px; height: 16px; border: 1px solid #777; border-radius: 8px; background: #d2d2d4; font-size: 12px; line-height: 14px; text-align: center; }
```
